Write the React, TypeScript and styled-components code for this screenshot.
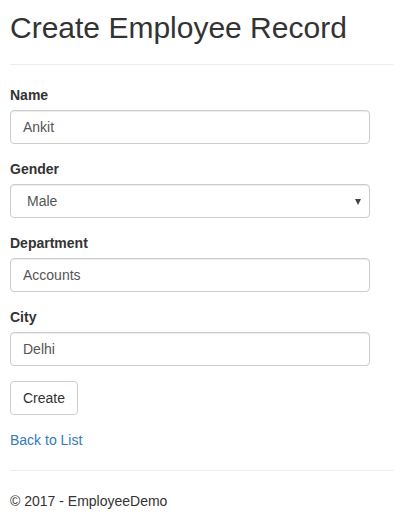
import React from "react";
import styled, { createGlobalStyle } from "styled-components";

const GlobalStyle = createGlobalStyle`
  html, body {
    margin: 0;
    padding: 0;
    background: #fff;
  }
  body {
    font-family: "Liberation Sans", Arial, Helvetica, sans-serif;
    font-size: 14px;
    line-height: 1.42857143;
    color: #333;
  }
  * { box-sizing: border-box; }
`;

const Page = styled.div`
  padding: 11px 0 0 10px;
`;

const Title = styled.h2`
  margin: 0 0 20px;
  font-size: 30px;
  font-weight: 500;
  line-height: 33px;
  color: #333;
`;

const Rule = styled.hr`
  margin: 0 0 20px;
  border: 0;
  border-top: 1px solid #eee;
  height: 0;
`;

const Form = styled.form`
  display: flex;
  flex-direction: column;
`;

const Group = styled.div`
  display: flex;
  flex-direction: column;
  margin-bottom: 15px;
`;

const Label = styled.label`
  display: block;
  font-weight: bold;
  margin-bottom: 5px;
  height: 20px;
`;

const Input = styled.input`
  display: block;
  width: 360px;
  height: 34px;
  padding: 6px 12px;
  font-family: inherit;
  font-size: 14px;
  line-height: 1.42857143;
  color: #555;
  background: #fff;
  border: 1px solid #ccc;
  border-radius: 4px;
  box-shadow: inset 0 1px 1px rgba(0, 0, 0, 0.075);
  outline: none;
`;

const SelectWrap = styled.div`
  position: relative;
  width: 360px;
`;

const Select = styled.select`
  display: block;
  width: 360px;
  height: 34px;
  padding: 6px 12px 6px 16px;
  font-family: inherit;
  font-size: 14px;
  line-height: 1.42857143;
  color: #555;
  background: #fff;
  border: 1px solid #ccc;
  border-radius: 4px;
  box-shadow: inset 0 1px 1px rgba(0, 0, 0, 0.075);
  appearance: none;
  -webkit-appearance: none;
  outline: none;
`;

const Arrow = styled.span`
  position: absolute;
  right: 9px;
  top: 15px;
  width: 0;
  height: 0;
  border-left: 3.5px solid transparent;
  border-right: 3.5px solid transparent;
  border-top: 6px solid #444;
  pointer-events: none;
`;

const Button = styled.button`
  align-self: flex-start;
  height: 34px;
  padding: 6px 12px;
  font-family: inherit;
  font-size: 14px;
  line-height: 1.42857143;
  color: #333;
  background: #fff;
  border: 1px solid #ccc;
  border-radius: 4px;
  cursor: pointer;
`;

const LinkRow = styled.div`
  margin-bottom: 20px;
  height: 20px;
`;

const Link = styled.a`
  color: #337ab7;
  text-decoration: none;
`;

const Footer = styled.footer`
  p {
    margin: 0;
  }
`;

export default function App() {
  return (
    <>
      <GlobalStyle />
      <Page>
        <Title>Create Employee Record</Title>
        <Rule />
        <Form onSubmit={(e) => e.preventDefault()}>
          <Group>
            <Label>Name</Label>
            <Input defaultValue="Ankit" />
          </Group>
          <Group>
            <Label>Gender</Label>
            <SelectWrap>
              <Select defaultValue="Male">
                <option>Male</option>
                <option>Female</option>
              </Select>
              <Arrow />
            </SelectWrap>
          </Group>
          <Group>
            <Label>Department</Label>
            <Input defaultValue="Accounts" />
          </Group>
          <Group>
            <Label>City</Label>
            <Input defaultValue="Delhi" />
          </Group>
          <Group>
            <Button type="submit">Create</Button>
          </Group>
        </Form>
        <LinkRow>
          <Link href="#">Back to List</Link>
        </LinkRow>
        <Rule />
        <Footer>
          <p>© 2017 - EmployeeDemo</p>
        </Footer>
      </Page>
    </>
  );
}
